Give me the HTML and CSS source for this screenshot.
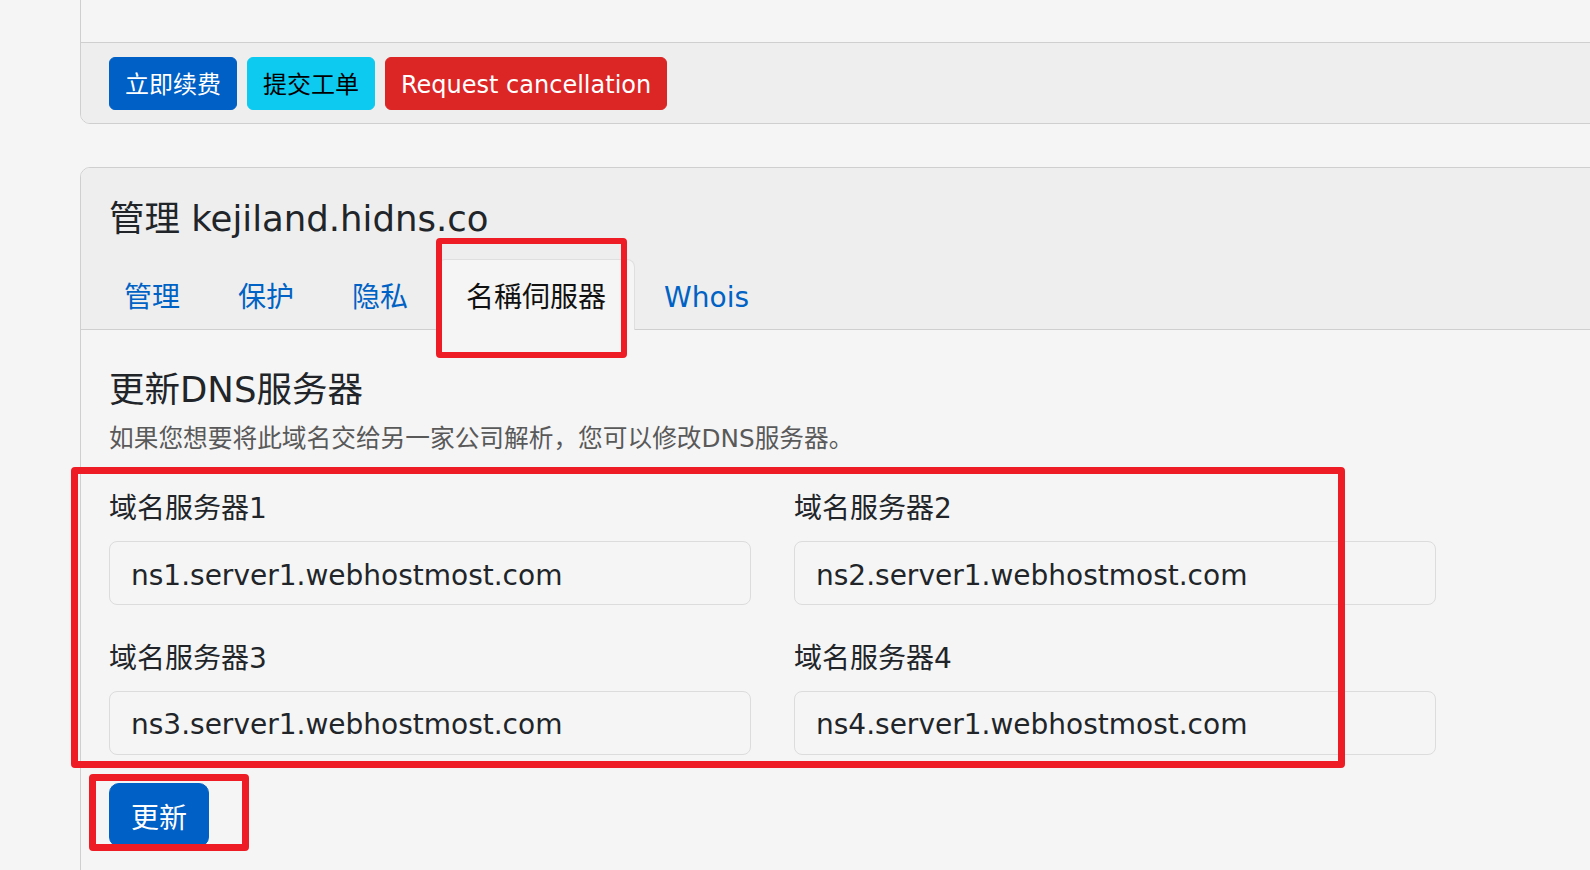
FILE: index.html
```html
<!DOCTYPE html>
<html lang="zh-CN">
<head>
<meta charset="utf-8">
<title>管理 kejiland.hidns.co</title>
<link rel="stylesheet" href="styles.css">
</head>
<body>
<div class="page">
  <section class="card card-overview">
    <div class="card-body card-body-empty"></div>
    <div class="card-footer">
      <button class="btn btn-primary" type="button">立即续费</button>
      <button class="btn btn-info" type="button">提交工单</button>
      <button class="btn btn-danger" type="button">Request cancellation</button>
    </div>
  </section>

  <section class="card card-manage">
    <div class="card-header">
      <h3 class="card-title">管理 kejiland.hidns.co</h3>
      <ul class="nav-tabs">
        <li><a class="tab" href="#">管理</a></li>
        <li><a class="tab" href="#">保护</a></li>
        <li><a class="tab" href="#">隐私</a></li>
        <li><a class="tab active" href="#">名稱伺服器</a></li>
        <li><a class="tab" href="#">Whois</a></li>
      </ul>
    </div>
    <div class="card-body">
      <h3 class="section-title">更新DNS服务器</h3>
      <p class="section-desc">如果您想要将此域名交给另一家公司解析，您可以修改DNS服务器。</p>
      <form class="ns-form">
        <div class="ns-grid">
          <div class="field">
            <label class="field-label" for="ns1">域名服务器1</label>
            <input class="field-input" id="ns1" type="text" value="ns1.server1.webhostmost.com">
          </div>
          <div class="field">
            <label class="field-label" for="ns2">域名服务器2</label>
            <input class="field-input" id="ns2" type="text" value="ns2.server1.webhostmost.com">
          </div>
          <div class="field">
            <label class="field-label" for="ns3">域名服务器3</label>
            <input class="field-input" id="ns3" type="text" value="ns3.server1.webhostmost.com">
          </div>
          <div class="field">
            <label class="field-label" for="ns4">域名服务器4</label>
            <input class="field-input" id="ns4" type="text" value="ns4.server1.webhostmost.com">
          </div>
        </div>
        <button class="btn btn-primary btn-lg" type="button">更新</button>
      </form>
    </div>
  </section>
</div>

<div class="mark mark-tab"></div>
<div class="mark mark-fields"></div>
<div class="mark mark-submit"></div>
</body>
</html>
```

FILE: styles.css
```css
html {
  overflow: hidden;
}

body {
  margin: 0;
  background: #f5f5f5;
  color: #212529;
  font-family: "DejaVu Sans", "Noto Sans CJK SC", sans-serif;
}

.page {
  margin-top: -30px;
  margin-right: -40px;
  padding-left: 80px;
}

.card {
  border: 1px solid #cfcfcf;
  border-radius: 10px;
  background: #f5f5f5;
  overflow: hidden;
}

.card-body-empty {
  height: 71px;
}

.card-footer {
  display: flex;
  gap: 10px;
  padding: 14px 28px 13px;
  background: #eeeeee;
  border-top: 1px solid #cfcfcf;
}

.btn {
  font-family: inherit;
  font-size: 24px;
  line-height: 35px;
  padding: 10px 15px 6px;
  border: 1px solid transparent;
  border-radius: 6px;
  cursor: pointer;
}

.btn-primary {
  background: #0060c6;
  border-color: #0060c6;
  color: #ffffff;
}

.btn-info {
  background: #0dcaf0;
  border-color: #0dcaf0;
  color: #000000;
}

.btn-danger {
  background: #dc2626;
  border-color: #dc2626;
  color: #ffffff;
}

.btn-lg {
  font-size: 28px;
  line-height: 42px;
  padding: 14px 21px 6px;
  border-radius: 10px;
}

.card-manage {
  margin-top: 43px;
}

.card-header {
  background: #eeeeee;
  padding: 30px 28px 0;
  border-bottom: 1px solid #cfcfcf;
}

.card-title {
  margin: 0 0 19px;
  font-size: 35.5px;
  line-height: 42px;
  font-weight: 400;
  color: #212529;
}

.nav-tabs {
  display: flex;
  list-style: none;
  margin: 0 0 -1px -14px;
  padding: 0;
}

.tab {
  display: block;
  padding: 17px 28px 11px;
  font-size: 28px;
  line-height: 42px;
  color: #0062c4;
  text-decoration: none;
  border: 1px solid transparent;
  border-bottom: 0;
  border-radius: 8px 8px 0 0;
}

.tab.active {
  color: #111111;
  background: #f5f5f5;
  border-color: #dfdfdf;
}

.card-manage .card-body {
  padding: 37px 28px 40px;
}

.section-title {
  margin: 0 0 9px;
  padding-top: 2px;
  font-size: 35.5px;
  line-height: 42px;
  font-weight: 400;
  color: #212529;
}

.section-desc {
  margin: 0 0 28.5px;
  font-size: 24.7px;
  line-height: 37.5px;
  color: #595959;
}

.ns-grid {
  display: grid;
  grid-template-columns: 642px 642px;
  column-gap: 43px;
  row-gap: 30.5px;
  margin-bottom: 28.5px;
}

.field {
  display: flex;
  flex-direction: column;
}

.field-label {
  font-size: 28px;
  line-height: 42px;
  padding-top: 2px;
  margin-bottom: 11px;
  color: #212529;
}

.field-input {
  box-sizing: border-box;
  width: 100%;
  height: 64px;
  padding: 12px 21px 8px;
  font-family: inherit;
  font-size: 28px;
  line-height: 42px;
  color: #212529;
  background: #f5f5f5;
  border: 1px solid #dcdcdc;
  border-radius: 8px;
  outline: none;
}

.mark {
  position: absolute;
  border: 6px solid #ee1c25;
  border-radius: 4px;
  box-sizing: border-box;
  pointer-events: none;
}

.mark-tab {
  left: 436px;
  top: 238px;
  width: 191px;
  height: 120px;
}

.mark-fields {
  left: 71px;
  top: 467px;
  width: 1274px;
  height: 301px;
  border-width: 7px;
}

.mark-submit {
  left: 89px;
  top: 774px;
  width: 160px;
  height: 77px;
  border-width: 7px;
}
```
